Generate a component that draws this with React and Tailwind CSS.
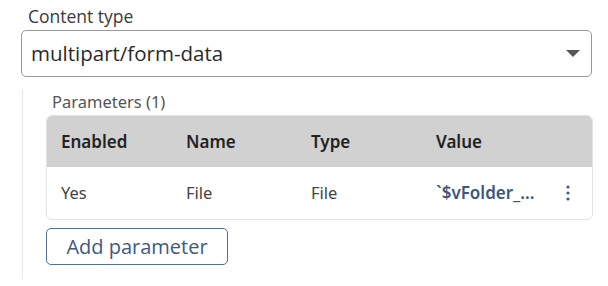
import React from 'react';

const headers = ['Enabled', 'Name', 'Type', 'Value'];

const App = () => {
  return (
    <div className="w-[608px] h-[286px] bg-white overflow-hidden font-['Open_Sans',sans-serif] text-[#333]">
      <div className="pl-[21px] pr-[16px] pt-[3px]">
        <label className="block pl-[7px] text-[17.5px] leading-[26px] text-[#3a3a3a]">Content type</label>
        <div className="mt-[1px] h-[47px] w-[571px] rounded-[5px] border border-[#9a9a9a] flex items-center justify-between pl-[9px] pr-[11px]">
          <span className="text-[20.5px] text-[#2a2a2a]">multipart/form-data</span>
          <svg width="14" height="8" viewBox="0 0 14 8">
            <path d="M0 0 L14 0 L7 7 Z" fill="#555" />
          </svg>
        </div>
        <div className="mt-[13px] ml-[1px] border-l border-[#e6e6e6] pl-[23px] pb-[14px] font-['Noto_Sans',sans-serif]">
          <div className="pl-[6px] text-[16.5px] leading-[20px] text-[#555] pt-[2px]">Parameters (1)</div>
          <div className="mt-[3px] w-[547px] rounded-[6px] border border-[#e2e2e2] overflow-hidden">
            <div className="h-[51px] bg-[#d1d1d1] flex items-center pl-[14px] text-[17px] font-semibold text-[#222]">
              {headers.map((h, i) => (
                <div key={h} className={i < 3 ? 'w-[125px]' : 'flex-1'}>{h}</div>
              ))}
            </div>
            <div className="h-[52px] flex items-center pl-[14px] text-[16.5px] text-[#444]">
              <div className="w-[125px]">Yes</div>
              <div className="w-[125px]">File</div>
              <div className="w-[125px]">File</div>
              <div className="flex-1 flex items-center justify-between pr-[22px]">
                <span className="font-semibold text-[#3b5680] text-[17px]">`$vFolder_...</span>
                <svg width="4" height="16" viewBox="0 0 4 16">
                  <circle cx="2" cy="2" r="1.6" fill="#4a5a78" />
                  <circle cx="2" cy="8" r="1.6" fill="#4a5a78" />
                  <circle cx="2" cy="14" r="1.6" fill="#4a5a78" />
                </svg>
              </div>
            </div>
          </div>
          <button className="mt-[8px] h-[37px] w-[182px] rounded-[5px] border border-[#55708f] text-[20px] leading-[24px] text-[#3d5a82] font-['Open_Sans',sans-serif]">
            Add parameter
          </button>
        </div>
      </div>
    </div>
  );
};

export default App;
